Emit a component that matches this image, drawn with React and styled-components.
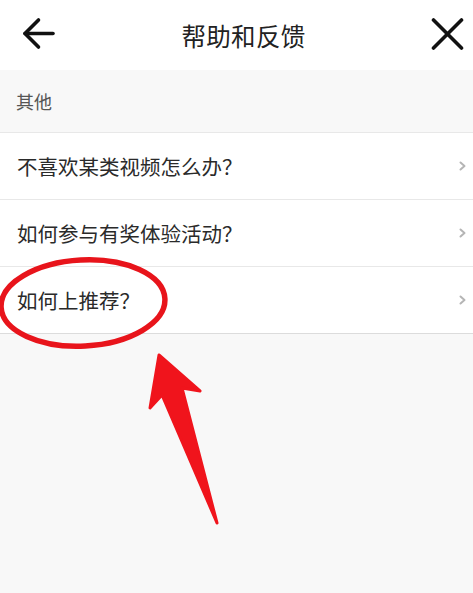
import React from 'react'
import styled, { createGlobalStyle } from 'styled-components'

const GlobalStyle = createGlobalStyle`
	html, body {
		margin: 0;
		padding: 0;
		background: #f8f8f8;
	}
	body {
		font-family: "Noto Sans CJK SC", "Noto Sans", sans-serif;
	}
	#root {
		min-height: 100vh;
	}
`

const questions = [
	'不喜欢某类视频怎么办？',
	'如何参与有奖体验活动？',
	'如何上推荐？',
]

const App = () => {
	return (
		<Page>
			<GlobalStyle />
			<Header>
				<IconButton aria-label="back">
					<svg width="33" height="33" viewBox="0 0 33 33" fill="none" stroke="#111" strokeWidth="3.6" strokeLinecap="round" strokeLinejoin="round">
						<path d="M31 16.5H3" />
						<path d="M16.5 3L3 16.5L16.5 30" />
					</svg>
				</IconButton>
				<Title>帮助和反馈</Title>
				<IconButton aria-label="close">
					<svg width="33" height="33" viewBox="0 0 33 33" fill="none" stroke="#111" strokeWidth="3.6" strokeLinecap="round">
						<path d="M2.5 3L30.5 31" />
						<path d="M30.5 3L2.5 31" />
					</svg>
				</IconButton>
			</Header>
			<SectionTitle>其他</SectionTitle>
			<List>
				{questions.map((q) => (
					<Row key={q}>
						<RowText>{q}</RowText>
						<svg width="7" height="10" viewBox="0 0 7 10" fill="none" stroke="#b5b5b5" strokeWidth="2" strokeLinecap="round" strokeLinejoin="round">
							<path d="M1.5 1.5L5.5 5L1.5 8.5" />
						</svg>
					</Row>
				))}
			</List>
			{/* red hand-drawn annotation over the list */}
			<Annotation width="473" height="593" viewBox="0 0 473 593">
				<ellipse cx="83" cy="303" rx="82" ry="43" fill="none" stroke="#e8141b" strokeWidth="5.5" transform="rotate(-3 83 303)" />
				<polygon
					points="159,355 200,391 182,388 217,523 162,395 150,408"
					fill="#f0141c"
					stroke="#f0141c"
					strokeWidth="3"
					strokeLinejoin="round"
				/>
			</Annotation>
		</Page>
	)
}

const Page = styled.div`
	position: relative;
	min-height: 100vh;
	background: #f8f8f8;
`

const Header = styled.div`
	display: flex;
	align-items: center;
	justify-content: space-between;
	height: 70px;
	padding: 0 9px 0 21px;
	background: #fff;
`

const IconButton = styled.div`
	display: flex;
	align-items: center;
	justify-content: center;
	width: 34px;
	height: 34px;
	margin-top: -4px;
`

const Title = styled.div`
	font-size: 24.5px;
	color: #222;
	letter-spacing: 0.3px;
	margin-left: 2px;
`

const SectionTitle = styled.div`
	display: flex;
	align-items: center;
	height: 62px;
	padding-left: 16px;
	font-size: 18px;
	color: #555;
	background: #f8f8f8;
	border-bottom: 1px solid #e8e8e8;
`

const List = styled.div`
	background: #fff;
	border-bottom: 1px solid #dcdcdc;
`

const Row = styled.div`
	display: flex;
	align-items: center;
	justify-content: space-between;
	height: 66px;
	padding: 0 7px 0 17px;
	border-bottom: 1px solid #e8e8e8;

	&:last-child {
		border-bottom: none;
	}
`

const RowText = styled.div`
	font-size: 20.5px;
	color: #2a2a2a;
`

const Annotation = styled.svg`
	position: absolute;
	left: 0;
	top: 0;
	pointer-events: none;
`

export default App
